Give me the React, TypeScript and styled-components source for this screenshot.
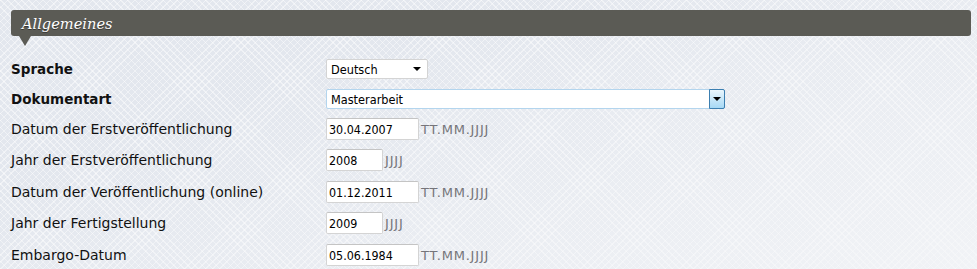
import React from 'react';
import styled, { createGlobalStyle } from 'styled-components';

const GlobalStyle = createGlobalStyle`
  html, body {
    margin: 0;
    padding: 0;
  }
  body {
    width: 977px;
    height: 269px;
    overflow: hidden;
    background-color: #e3e7ee;
    background-image:
      linear-gradient(160deg, rgba(227, 231, 238, 0) 30%, rgba(246, 247, 249, 0.75) 100%),
      repeating-linear-gradient(45deg, rgba(255, 255, 255, 0.45) 0 1px, transparent 1px 5px),
      repeating-linear-gradient(-45deg, rgba(255, 255, 255, 0.45) 0 1px, transparent 1px 5px);
    font-family: 'DejaVu Sans', Verdana, sans-serif;
  }
`;

const Page = styled.div`
  padding: 10px 6px 0 11px;
`;

const SectionHeader = styled.div`
  position: relative;
  height: 26px;
  background: #5b5b55;
  border-radius: 3px;
  padding-left: 11px;
  display: flex;
  align-items: center;

  &::after {
    content: '';
    position: absolute;
    left: 8px;
    top: 26px;
    border-left: 6px solid transparent;
    border-right: 6px solid transparent;
    border-top: 10px solid #5b5b55;
  }
`;

const SectionTitle = styled.h2`
  margin: 0;
  color: #ffffff;
  font-family: 'DejaVu Serif', Georgia, serif;
  font-style: italic;
  font-weight: normal;
  font-size: 14.6px;
  text-shadow: 0 1px 0 rgba(0, 0, 0, 0.4);
`;

const Form = styled.div`
  margin-top: 23px;
`;

const Row = styled.div<{ $height: number }>`
  display: grid;
  grid-template-columns: 315px 1fr;
  align-items: start;
  height: ${(p) => p.$height}px;
`;

const Label = styled.label<{ $bold?: boolean }>`
  font-size: ${(p) => (p.$bold ? 13.5 : 14)}px;
  line-height: 20px;
  color: #111;
  font-weight: ${(p) => (p.$bold ? 'bold' : 'normal')};
  padding-top: ${(p) => (p.$bold ? 0 : 1)}px;
`;

const Field = styled.div`
  display: flex;
  align-items: center;
`;

const Select = styled.div<{ $width: number; $active?: boolean }>`
  width: ${(p) => p.$width}px;
  height: 20px;
  box-sizing: border-box;
  background: #fff;
  border: 1px solid ${(p) => (p.$active ? '#b3d5ee' : '#d4d4d4')};
  border-radius: 2px;
  display: flex;
  align-items: center;
  justify-content: space-between;
  font-family: Tahoma, 'DejaVu Sans Condensed', 'DejaVu Sans', sans-serif;
  font-size: 12.6px;
  color: #000;
  padding-left: 4px;
`;

const Arrow = styled.span`
  width: 0;
  height: 0;
  border-left: 4px solid transparent;
  border-right: 4px solid transparent;
  border-top: 4px solid #000;
  margin-right: 6px;
`;

const DropButton = styled.div`
  align-self: stretch;
  width: 16px;
  margin: -1px -1px -1px 0;
  box-sizing: border-box;
  border: 1px solid #3c7fb1;
  border-radius: 0 2px 2px 0;
  background: linear-gradient(#eaf6fd, #a7d9f5);
  display: flex;
  align-items: center;
  justify-content: center;

  ${Arrow} {
    margin: 0;
  }
`;

const Input = styled.input<{ $width: number }>`
  width: ${(p) => p.$width}px;
  height: 22px;
  box-sizing: border-box;
  margin: 0;
  padding: 0 2px;
  background: #fff;
  border: 1px solid #d4d4d4;
  border-top-color: #c4c4c4;
  border-radius: 2px;
  font-family: Tahoma, 'DejaVu Sans Condensed', 'DejaVu Sans', sans-serif;
  font-size: 12.4px;
  color: #000;
  outline: none;
`;

const Hint = styled.span`
  margin-left: 2px;
  font-size: 13px;
  letter-spacing: 0.8px;
  color: #75757a;
`;

type DateRow = { label: string; value: string; kind: 'date' | 'year' };

const dateRows: DateRow[] = [
  { label: 'Datum der Erstveröffentlichung', value: '30.04.2007', kind: 'date' },
  { label: 'Jahr der Erstveröffentlichung', value: '2008', kind: 'year' },
  { label: 'Datum der Veröffentlichung (online)', value: '01.12.2011', kind: 'date' },
  { label: 'Jahr der Fertigstellung', value: '2009', kind: 'year' },
  { label: 'Embargo-Datum', value: '05.06.1984', kind: 'date' },
];

const rowHeights = [31, 32, 31, 32, 31];

export default function App() {
  return (
    <>
      <GlobalStyle />
      <Page>
        <SectionHeader>
          <SectionTitle>Allgemeines</SectionTitle>
        </SectionHeader>
        <Form>
          <Row $height={30}>
            <Label $bold>Sprache</Label>
            <Field>
              <Select $width={102}>
                Deutsch
                <Arrow />
              </Select>
            </Field>
          </Row>
          <Row $height={29}>
            <Label $bold>Dokumentart</Label>
            <Field>
              <Select $width={399} $active>
                Masterarbeit
                <DropButton>
                  <Arrow />
                </DropButton>
              </Select>
            </Field>
          </Row>
          {dateRows.map((row, i) => (
            <Row key={row.label} $height={rowHeights[i]}>
              <Label>{row.label}</Label>
              <Field>
                <Input
                  $width={row.kind === 'date' ? 93 : 57}
                  defaultValue={row.value}
                />
                <Hint>{row.kind === 'date' ? 'TT.MM.JJJJ' : 'JJJJ'}</Hint>
              </Field>
            </Row>
          ))}
        </Form>
      </Page>
    </>
  );
}
